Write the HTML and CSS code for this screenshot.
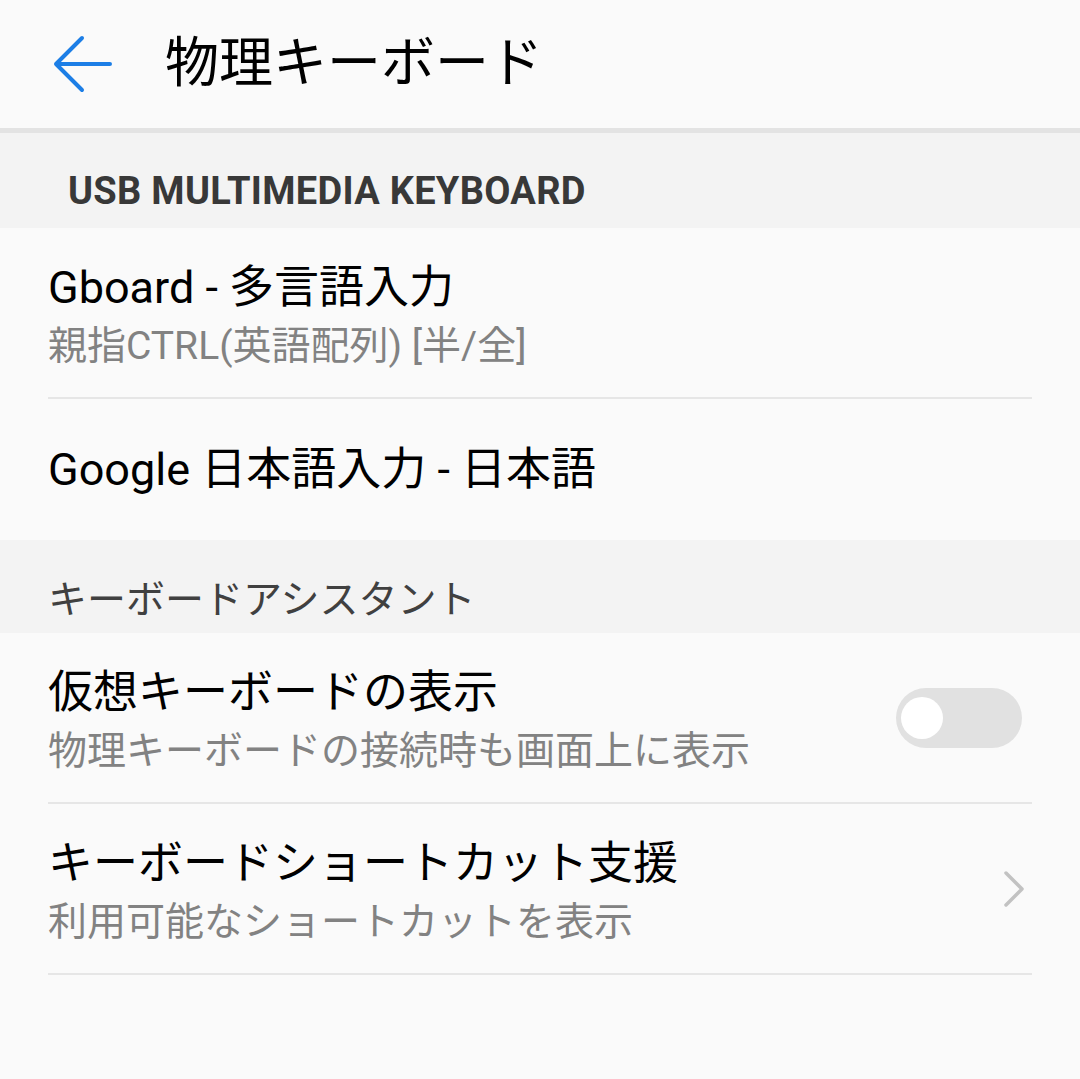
FILE: index.html
```html
<!DOCTYPE html>
<html lang="ja">
<head>
<meta charset="utf-8">
<link rel="stylesheet" href="styles.css">
</head>
<body>
<div class="screen">
  <header class="appbar">
    <svg class="back" width="60" height="60" viewBox="0 0 60 60">
      <path d="M4 30 H58 M30 4 L4 30 L30 56" fill="none" stroke="#1c7ee6" stroke-width="4" stroke-linecap="round" stroke-linejoin="round"/>
    </svg>
    <h1 class="title">物理キーボード</h1>
  </header>

  <div class="section section-usb">USB MULTIMEDIA KEYBOARD</div>

  <div class="row row-tall">
    <div class="row-inner divided">
      <div class="texts">
        <div class="main">Gboard - 多言語入力</div>
        <div class="sub">親指CTRL(英語配列) [半/全]</div>
      </div>
    </div>
  </div>
  <div class="row row-short">
    <div class="row-inner">
      <div class="texts">
        <div class="main">Google 日本語入力 - 日本語</div>
      </div>
    </div>
  </div>

  <div class="section section-plain">キーボードアシスタント</div>

  <div class="row row-tall">
    <div class="row-inner divided">
      <div class="texts two">
        <div class="main">仮想キーボードの表示</div>
        <div class="sub">物理キーボードの接続時も画面上に表示</div>
      </div>
      <div class="switch"><div class="knob"></div></div>
    </div>
  </div>
  <div class="row row-tall">
    <div class="row-inner divided">
      <div class="texts two">
        <div class="main">キーボードショートカット支援</div>
        <div class="sub">利用可能なショートカットを表示</div>
      </div>
      <svg class="chev" width="24" height="40" viewBox="0 0 24 40">
        <path d="M4 4 L20 20 L4 36" fill="none" stroke="#c2c2c2" stroke-width="3.5" stroke-linecap="round" stroke-linejoin="round"/>
      </svg>
    </div>
  </div>
</div>
</body>
</html>
```

FILE: styles.css
```css
html, body {
  margin: 0;
  padding: 0;
  background: #fafafa;
}
body {
  font-family: Roboto, "Noto Sans CJK JP", sans-serif;
  color: #000;
}
.screen {
  width: 1080px;
  height: 1079px;
  overflow: hidden;
  background: #fafafa;
}
.appbar {
  height: 128px;
  display: flex;
  align-items: center;
  padding-left: 52px;
  border-bottom: 5px solid #e3e3e3;
  box-sizing: content-box;
}
.back {
  flex: none;
}
.title {
  margin: 0 0 0 53px;
  font-size: 54px;
  font-weight: 400;
  line-height: 60px;
  color: #000;
}
.section {
  background: #f3f3f3;
  box-sizing: border-box;
  height: 95px;
  display: flex;
  align-items: center;
}
.section-usb {
  padding: 20px 0 0 68px;
  font-size: 38px;
  font-weight: 700;
  letter-spacing: 0.3px;
  color: #383838;
}
.section-plain {
  height: 93px;
  padding: 18px 0 0 48px;
  font-size: 39px;
  color: #404040;
}
.row {
  padding: 0 48px;
}
.row-inner {
  display: flex;
  align-items: center;
  justify-content: space-between;
  box-sizing: border-box;
}
.row-tall .row-inner {
  height: 171px;
}
.row-short .row-inner {
  height: 141px;
}
.divided {
  border-bottom: 2px solid #e6e6e6;
}
.texts {
  display: flex;
  flex-direction: column;
}
.row-tall .texts {
  padding-top: 6px;
}
.main {
  font-size: 45px;
  line-height: 60px;
  color: #000;
}
.sub {
  font-size: 39px;
  line-height: 56px;
  color: #828282;
}
.switch {
  width: 126px;
  height: 60px;
  border-radius: 30px;
  background: #e1e1e1;
  margin-right: 10px;
  display: flex;
  align-items: center;
  padding-left: 5px;
  box-sizing: border-box;
  flex: none;
}
.knob {
  width: 42px;
  height: 42px;
  border-radius: 50%;
  background: #fff;
}
.chev {
  margin-right: 6px;
  flex: none;
}
```
